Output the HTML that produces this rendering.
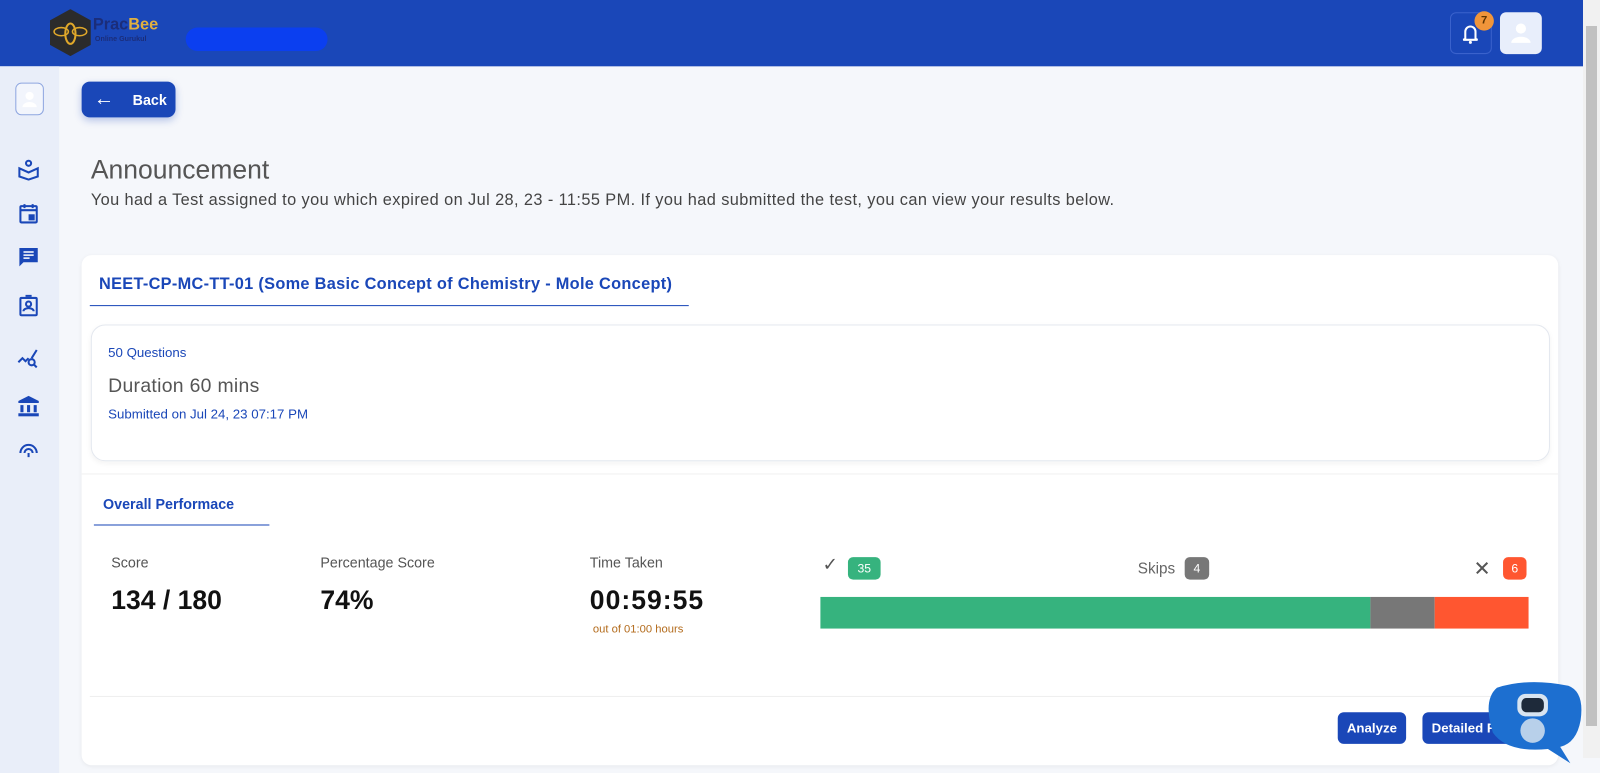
<!DOCTYPE html>
<html><head><style>
*{box-sizing:border-box;margin:0;padding:0}
body{width:1600px;height:758px;overflow:hidden;font-family:"Liberation Sans",sans-serif;background:#f5f7fb;position:relative}
#w{position:absolute;left:0;top:0;width:1583px;height:758px;transform:scale(1.0204);transform-origin:0 0}
.hdr{position:absolute;left:0;top:0;width:1583px;height:65px;background:#1a47b8}
.sb{position:absolute;left:1583px;top:0;width:17px;height:758px;background:#f1f1f1}
.sb div{position:absolute;left:3px;top:26px;width:11px;height:700px;background:#c1c1c1}
.side{position:absolute;left:0;top:65px;width:58px;height:693px;background:#e9eef9}
.ic{position:absolute;left:17px;width:22px;height:22px}
.card{position:absolute;left:80px;top:250px;width:1447px;height:500px;background:#fff;border-radius:10px;box-shadow:0 1px 4px rgba(0,0,0,.06)}
.b{color:#1a47b8}
.btn{position:absolute;background:#1a47b8;color:#fff;font-weight:bold;font-size:13px;border-radius:6px;display:flex;align-items:center;justify-content:center}
</style></head><body>
<div id="w">
<div class="hdr">
 <svg style="position:absolute;left:49px;top:9px" width="40" height="46" viewBox="0 0 40 46"><polygon points="20,0 40,11 40,35 20,46 0,35 0,11" fill="#2b2b2b"/><ellipse cx="20" cy="24" rx="5" ry="10" fill="none" stroke="#e0a82a" stroke-width="2"/><ellipse cx="11" cy="22" rx="7" ry="4" fill="none" stroke="#e0a82a" stroke-width="1.5"/><ellipse cx="29" cy="22" rx="7" ry="4" fill="none" stroke="#e0a82a" stroke-width="1.5"/></svg>
 <div style="position:absolute;left:91px;top:16px;font-size:16px;font-weight:bold;color:#1b2d7a">Prac<span style="color:#e0b040">Bee</span></div>
 <div style="position:absolute;left:93px;top:35px;font-size:7px;font-weight:bold;color:#1b2d7a">Online Gurukul</div>
 <div style="position:absolute;left:182px;top:27px;width:139px;height:23px;border-radius:12px;background:#0b3ff0"></div>
 <div style="position:absolute;left:1421px;top:12px;width:41px;height:41px;border:1px solid #3a62cc;border-radius:6px"></div>
 <svg style="position:absolute;left:1432px;top:22px" width="18" height="22" viewBox="0 0 18 22"><path d="M4 16V9a5 5 0 0 1 10 0v7l2 1H2z" fill="none" stroke="#fff" stroke-width="2"/><circle cx="9" cy="19.5" r="1.5" fill="#fff"/></svg>
 <div style="position:absolute;left:1445px;top:11px;width:19px;height:19px;border-radius:50%;background:#f0953a;color:#5a3300;font-size:11px;font-weight:bold;text-align:center;line-height:19px">7</div>
 <div style="position:absolute;left:1470px;top:12px;width:41px;height:41px;background:#e8eefb;border-radius:6px"><svg width="41" height="41" viewBox="0 0 41 41"><circle cx="20.5" cy="16" r="5" fill="#fff"/><path d="M11 30a9.5 6 0 0 1 19 0z" fill="#fff"/></svg></div>
</div>
<div class="side">
 <div style="position:absolute;left:15px;top:16px;width:28px;height:32px;border:1.5px solid #8ea6e0;border-radius:6px;background:#f2f5fc"><svg width="26" height="30" viewBox="0 0 26 30"><circle cx="13" cy="12" r="4" fill="#fff"/><path d="M6 23a7 5 0 0 1 14 0z" fill="#fff"/></svg></div>
 <svg class="ic" style="top:90px" viewBox="0 0 22 22" fill="none" stroke="#1a47b8" stroke-width="2"><circle cx="11" cy="5" r="2.5"/><path d="M2 10l9 4 9-4v8l-9 3-9-3z"/></svg>
 <svg class="ic" style="top:133px" viewBox="0 0 22 22" fill="none" stroke="#1a47b8" stroke-width="2"><rect x="3" y="4" width="16" height="16" rx="1"/><path d="M3 8h16M7 2v4M15 2v4"/><rect x="12" y="13" width="4" height="4" fill="#1a47b8"/></svg>
 <svg class="ic" style="top:176px" viewBox="0 0 22 22"><path d="M2 2h18v14H6l-4 4z" fill="#1a47b8"/><path d="M6 6h10M6 9h10M6 12h6" stroke="#fff" stroke-width="1.5"/></svg>
 <svg class="ic" style="top:223px" viewBox="0 0 22 22" fill="none" stroke="#1a47b8" stroke-width="2"><rect x="3" y="4" width="16" height="17" rx="1"/><path d="M8 2h6"/><circle cx="11" cy="10" r="2.5"/><path d="M6 17a5 3 0 0 1 10 0"/></svg>
 <svg class="ic" style="top:276px" viewBox="0 0 22 22" fill="none" stroke="#1a47b8" stroke-width="2"><path d="M1 14l4-4 3 3 3-3M19 2l-5 8"/><circle cx="14" cy="14" r="3"/><path d="M16 16l3 3"/></svg>
 <svg class="ic" style="top:322px" viewBox="0 0 22 22" fill="#1a47b8"><path d="M11 1l10 5v2H1V6z"/><rect x="3" y="10" width="3" height="7"/><rect x="9.5" y="10" width="3" height="7"/><rect x="16" y="10" width="3" height="7"/><rect x="1" y="18" width="20" height="3"/></svg>
 <svg class="ic" style="top:364px" viewBox="0 0 22 22" fill="none" stroke="#1a47b8" stroke-width="2"><path d="M3 15a8 8 0 1 1 16 0"/><path d="M7 15a4 4 0 0 1 8 0"/><path d="M11 15v4"/></svg>
</div>
<div class="btn" style="left:80px;top:80px;width:92px;height:35px;border-radius:8px;box-shadow:0 3px 8px rgba(26,71,184,.3);font-size:14px;justify-content:flex-start;padding-left:12px"><span style="font-size:20px;font-weight:normal;margin-right:18px">←</span>Back</div>
<div style="position:absolute;left:89px;top:151px;font-size:26px;color:#555">Announcement</div>
<div style="position:absolute;left:89px;top:188px;font-size:16px;letter-spacing:0.4px;color:#444;white-space:nowrap">You had a Test assigned to you which expired on Jul 28, 23 - 11:55 PM. If you had submitted the test, you can view your results below.</div>
<div class="card">
 <div class="b" style="position:absolute;left:17px;top:20px;font-size:16px;font-weight:bold;letter-spacing:0.3px">NEET-CP-MC-TT-01 (Some Basic Concept of Chemistry - Mole Concept)</div>
 <div style="position:absolute;left:8px;top:49px;width:587px;height:1px;background:#1a47b8"></div>
 <div style="position:absolute;left:9px;top:68px;width:1430px;height:134px;border:1px solid #e4e8ef;border-radius:14px;box-shadow:0 2px 5px rgba(0,0,0,.05)">
  <div class="b" style="position:absolute;left:16px;top:19px;font-size:13px">50 Questions</div>
  <div style="position:absolute;left:16px;top:49px;font-size:19px;color:#555;letter-spacing:0.3px">Duration 60 mins</div>
  <div class="b" style="position:absolute;left:16px;top:79px;font-size:13px">Submitted on Jul 24, 23 07:17 PM</div>
 </div>
 <div style="position:absolute;left:0;top:214px;width:1447px;height:1px;background:#f0f0f0"></div>
 <div class="b" style="position:absolute;left:21px;top:236px;font-size:14px;font-weight:bold">Overall Performace</div>
 <div style="position:absolute;left:12px;top:264px;width:172px;height:1px;background:#1a47b8"></div>
 <div style="position:absolute;left:29px;top:293px;font-size:14px;color:#555">Score</div>
 <div style="position:absolute;left:29px;top:323px;font-size:26px;font-weight:bold;color:#111">134 / 180</div>
 <div style="position:absolute;left:234px;top:293px;font-size:14px;color:#555">Percentage Score</div>
 <div style="position:absolute;left:234px;top:323px;font-size:26px;font-weight:bold;color:#111">74%</div>
 <div style="position:absolute;left:498px;top:293px;font-size:14px;color:#555">Time Taken</div>
 <div style="position:absolute;left:498px;top:323px;font-size:26px;font-weight:bold;color:#111;letter-spacing:1px">00:59:55</div>
 <div style="position:absolute;left:501px;top:361px;font-size:11px;color:#b36b1c">out of 01:00 hours</div>
 <div style="position:absolute;left:726px;top:293px;font-size:18px;color:#555">✓</div>
 <div style="position:absolute;left:751px;top:296px;width:32px;height:22px;border-radius:5px;background:#36b37e;color:#fff;font-size:12px;text-align:center;line-height:22px">35</div>
 <div style="position:absolute;left:1035px;top:299px;font-size:15px;color:#666">Skips</div>
 <div style="position:absolute;left:1081px;top:296px;width:24px;height:22px;border-radius:5px;background:#777;color:#fff;font-size:12px;text-align:center;line-height:22px">4</div>
 <div style="position:absolute;left:1364px;top:295px;font-size:20px;color:#555">✕</div>
 <div style="position:absolute;left:1393px;top:296px;width:23px;height:22px;border-radius:5px;background:#ff5630;color:#fff;font-size:12px;text-align:center;line-height:22px">6</div>
 <div style="position:absolute;left:724px;top:335px;width:539px;height:31px;background:#36b37e"></div>
 <div style="position:absolute;left:1263px;top:335px;width:63px;height:31px;background:#777"></div>
 <div style="position:absolute;left:1326px;top:335px;width:92px;height:31px;background:#ff5630"></div>
 <div style="position:absolute;left:8px;top:432px;width:1430px;height:1px;background:#eee"></div>
</div>
<div class="btn" style="left:1311px;top:698px;width:67px;height:31px">Analyze</div>
<div class="btn" style="left:1394px;top:698px;width:100px;height:31px;justify-content:flex-start;padding-left:9px">Detailed R</div>
<svg style="position:absolute;left:1457px;top:666px" width="96" height="82" viewBox="0 0 96 82"><path d="M10 8Q40 -2 80 6Q96 12 92 40Q88 62 72 66L82 82L60 68Q20 72 6 52Q-4 20 10 8z" fill="#1d6fd0"/><rect x="30" y="14" width="30" height="22" rx="8" fill="#d8e4f0"/><rect x="34" y="18" width="22" height="14" rx="5" fill="#1e2a3a"/><ellipse cx="45" cy="50" rx="12" ry="12" fill="#b8d0ea"/></svg>
</div>
<div class="sb"><div></div></div>
</body></html>
